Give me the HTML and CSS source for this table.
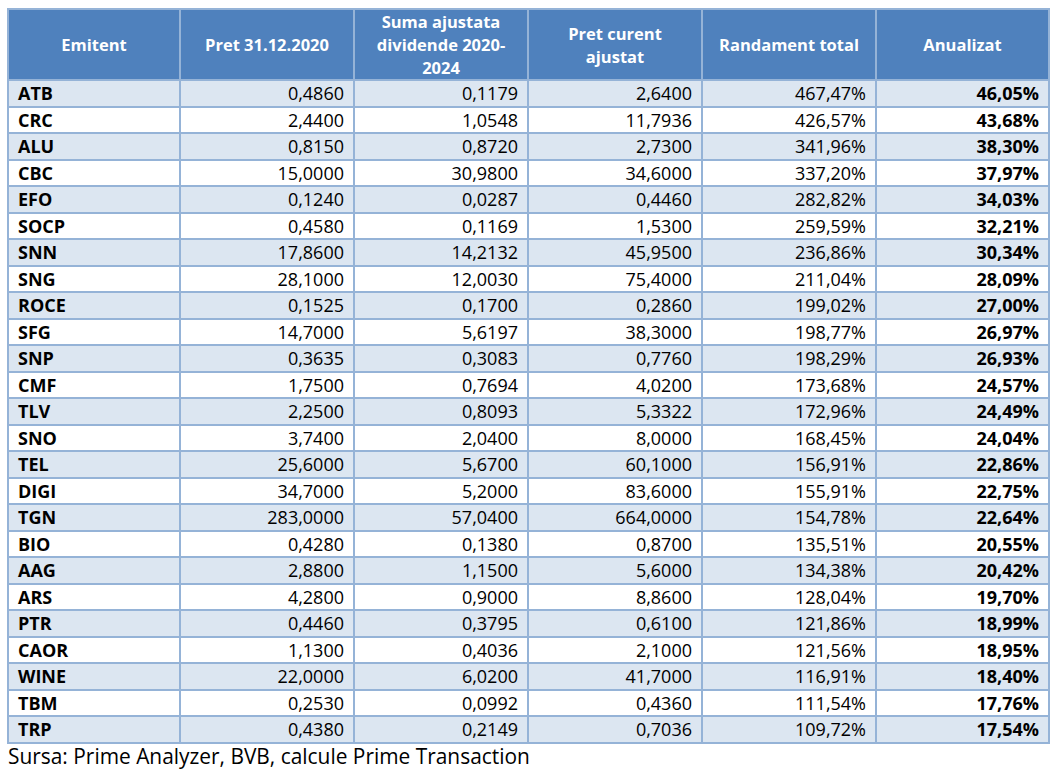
FILE: index.html
```html
<!DOCTYPE html>
<html>
<head>
<meta charset="utf-8">
<link rel="stylesheet" href="styles.css">
</head>
<body>
<div class="page">
<table class="data">
<colgroup>
<col class="c1"><col class="c2"><col class="c3"><col class="c4"><col class="c5"><col class="c6">
</colgroup>
<thead>
<tr><th>Emitent</th><th>Pret 31.12.2020</th><th>Suma ajustata dividende 2020-2024</th><th>Pret curent ajustat</th><th>Randament total</th><th>Anualizat</th></tr>
</thead>
<tbody>
<tr><td>ATB</td><td>0,4860</td><td>0,1179</td><td>2,6400</td><td>467,47%</td><td>46,05%</td></tr>
<tr><td>CRC</td><td>2,4400</td><td>1,0548</td><td>11,7936</td><td>426,57%</td><td>43,68%</td></tr>
<tr><td>ALU</td><td>0,8150</td><td>0,8720</td><td>2,7300</td><td>341,96%</td><td>38,30%</td></tr>
<tr><td>CBC</td><td>15,0000</td><td>30,9800</td><td>34,6000</td><td>337,20%</td><td>37,97%</td></tr>
<tr><td>EFO</td><td>0,1240</td><td>0,0287</td><td>0,4460</td><td>282,82%</td><td>34,03%</td></tr>
<tr><td>SOCP</td><td>0,4580</td><td>0,1169</td><td>1,5300</td><td>259,59%</td><td>32,21%</td></tr>
<tr><td>SNN</td><td>17,8600</td><td>14,2132</td><td>45,9500</td><td>236,86%</td><td>30,34%</td></tr>
<tr><td>SNG</td><td>28,1000</td><td>12,0030</td><td>75,4000</td><td>211,04%</td><td>28,09%</td></tr>
<tr><td>ROCE</td><td>0,1525</td><td>0,1700</td><td>0,2860</td><td>199,02%</td><td>27,00%</td></tr>
<tr><td>SFG</td><td>14,7000</td><td>5,6197</td><td>38,3000</td><td>198,77%</td><td>26,97%</td></tr>
<tr><td>SNP</td><td>0,3635</td><td>0,3083</td><td>0,7760</td><td>198,29%</td><td>26,93%</td></tr>
<tr><td>CMF</td><td>1,7500</td><td>0,7694</td><td>4,0200</td><td>173,68%</td><td>24,57%</td></tr>
<tr><td>TLV</td><td>2,2500</td><td>0,8093</td><td>5,3322</td><td>172,96%</td><td>24,49%</td></tr>
<tr><td>SNO</td><td>3,7400</td><td>2,0400</td><td>8,0000</td><td>168,45%</td><td>24,04%</td></tr>
<tr><td>TEL</td><td>25,6000</td><td>5,6700</td><td>60,1000</td><td>156,91%</td><td>22,86%</td></tr>
<tr><td>DIGI</td><td>34,7000</td><td>5,2000</td><td>83,6000</td><td>155,91%</td><td>22,75%</td></tr>
<tr><td>TGN</td><td>283,0000</td><td>57,0400</td><td>664,0000</td><td>154,78%</td><td>22,64%</td></tr>
<tr><td>BIO</td><td>0,4280</td><td>0,1380</td><td>0,8700</td><td>135,51%</td><td>20,55%</td></tr>
<tr><td>AAG</td><td>2,8800</td><td>1,1500</td><td>5,6000</td><td>134,38%</td><td>20,42%</td></tr>
<tr><td>ARS</td><td>4,2800</td><td>0,9000</td><td>8,8600</td><td>128,04%</td><td>19,70%</td></tr>
<tr><td>PTR</td><td>0,4460</td><td>0,3795</td><td>0,6100</td><td>121,86%</td><td>18,99%</td></tr>
<tr><td>CAOR</td><td>1,1300</td><td>0,4036</td><td>2,1000</td><td>121,56%</td><td>18,95%</td></tr>
<tr><td>WINE</td><td>22,0000</td><td>6,0200</td><td>41,7000</td><td>116,91%</td><td>18,40%</td></tr>
<tr><td>TBM</td><td>0,2530</td><td>0,0992</td><td>0,4360</td><td>111,54%</td><td>17,76%</td></tr>
<tr><td>TRP</td><td>0,4380</td><td>0,2149</td><td>0,7036</td><td>109,72%</td><td>17,54%</td></tr>
</tbody>
</table>
<p class="source">Sursa: Prime Analyzer, BVB, calcule Prime Transaction</p>
</div>
</body>
</html>
```

FILE: styles.css
```css
html, body {
  margin: 0;
  padding: 0;
  background: #ffffff;
}
.page {
  padding: 8px 0 0 7px;
  font-family: "Open Sans", "Liberation Sans", sans-serif;
  color: #000000;
}
.data {
  border-collapse: collapse;
  table-layout: fixed;
  width: 1041px;
}
.c1 { width: 172px; }
.c2, .c3, .c4, .c5 { width: 174px; }
.c6 { width: 173px; }
.data th, .data td {
  border: 2px solid #95b3d7;
  padding: 0 9px;
}
.data th {
  background: #4f81bd;
  color: #ffffff;
  font-weight: 700;
  font-size: 16.5px;
  line-height: 23px;
  height: 67px;
  text-align: center;
  vertical-align: middle;
  padding: 0 12px;
}
.data td {
  font-size: 18px;
  line-height: 24px;
  height: 24.5px;
  text-align: right;
  white-space: nowrap;
}
.data td:first-child {
  text-align: left;
  font-weight: 700;
}
.data td:last-child {
  font-weight: 700;
}
.data tbody tr:nth-child(odd) td {
  background: #dce6f1;
}
.data tbody tr:nth-child(even) td {
  background: #ffffff;
}
.source {
  margin: 0;
  font-size: 20.9px;
  line-height: 25px;
  padding-left: 1px;
}
```
